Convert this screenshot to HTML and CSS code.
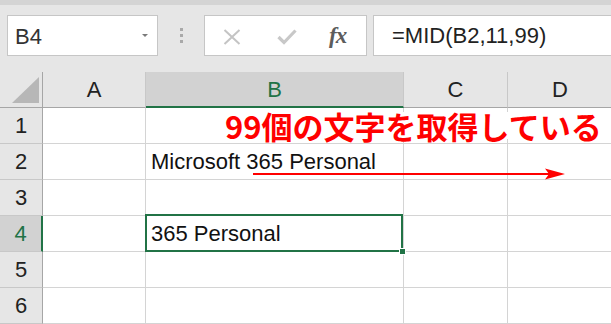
FILE: index.html
```html
<!DOCTYPE html>
<html lang="ja">
<head>
<meta charset="utf-8">
<title>MID</title>
<link rel="stylesheet" href="styles.css">
</head>
<body>
<div class="app">
  <div class="topstrip"></div>
  <div class="toolbar">
    <div class="namebox">
      <span class="name">B4</span>
      <span class="dropdown"></span>
    </div>
    <div class="grip"><i></i><i></i><i></i></div>
    <div class="buttons">
      <svg class="btn-x" width="18" height="16" viewBox="0 0 18 16"><path d="M1.5 1 L16.5 15 M16.5 1 L1.5 15" stroke="#c4c4c4" stroke-width="2" fill="none"/></svg>
      <svg class="btn-ok" width="20" height="16" viewBox="0 0 20 16"><path d="M1.5 8 L7 13.5 L18.5 1.5" stroke="#c8c8c8" stroke-width="3.2" fill="none"/></svg>
      <span class="fx">fx</span>
    </div>
    <div class="formula">=MID(B2,11,99)</div>
  </div>
  <div class="sheet">
    <div class="corner"><span class="tri"></span></div>
    <div class="colhead">A</div>
    <div class="colhead sel">B</div>
    <div class="colhead">C</div>
    <div class="colhead last">D</div>

    <div class="rowhead">1</div>
    <div class="cell"></div><div class="cell"></div><div class="cell"></div><div class="cell last"></div>

    <div class="rowhead">2</div>
    <div class="cell"></div><div class="cell text">Microsoft 365 Personal</div><div class="cell"></div><div class="cell last"></div>

    <div class="rowhead">3</div>
    <div class="cell"></div><div class="cell"></div><div class="cell"></div><div class="cell last"></div>

    <div class="rowhead sel">4</div>
    <div class="cell"></div><div class="cell text active">365 Personal<span class="handle"></span></div><div class="cell"></div><div class="cell last"></div>

    <div class="rowhead">5</div>
    <div class="cell"></div><div class="cell"></div><div class="cell"></div><div class="cell last"></div>

    <div class="rowhead">6</div>
    <div class="cell"></div><div class="cell"></div><div class="cell"></div><div class="cell last"></div>
  </div>

  <div class="callout">99個の文字を取得している</div>
  <svg class="arrow" width="320" height="14" viewBox="0 0 320 14">
    <line x1="0" y1="7" x2="300" y2="7" stroke="#ff0000" stroke-width="2.2"/>
    <polygon points="292,1.5 312,7 292,12.5 296,7" fill="#ff0000"/>
  </svg>
</div>
</body>
</html>
```

FILE: styles.css
```css
* { box-sizing: border-box; }
html, body { margin: 0; padding: 0; }
body {
  width: 611px;
  height: 324px;
  overflow: hidden;
  background: #e6e6e6;
  font-family: "Liberation Sans", Arial, sans-serif;
  color: #1a1a1a;
}
.app { position: relative; width: 611px; height: 324px; }

.topstrip { height: 5px; background: #d4d4d4; }

.toolbar {
  height: 67px;
  display: flex;
  align-items: flex-start;
  padding-top: 10px;
}
.namebox {
  margin-left: 7px;
  width: 151px;
  height: 41px;
  background: #fff;
  border: 1px solid #c6c6c6;
  display: flex;
  align-items: center;
  justify-content: space-between;
  padding: 3px 9px 0 7px;
}
.name { font-size: 22px; color: #333; line-height: 1; }
.dropdown {
  width: 0; height: 0;
  border-left: 3px solid transparent;
  border-right: 3px solid transparent;
  border-top: 3px solid #7a7a7a;
  margin-bottom: 4px;
}
.grip {
  width: 46px;
  height: 41px;
  display: flex;
  flex-direction: column;
  align-items: center;
  gap: 3px;
  padding-top: 13px;
}
.grip i { display: block; width: 3px; height: 3px; background: #a9a9a9; }

.buttons {
  width: 163px;
  height: 41px;
  background: #fff;
  border: 1px solid #c6c6c6;
  display: flex;
  align-items: center;
  padding: 2px 0 0 18px;
}
.btn-x { margin-right: 36px; }
.btn-ok { margin-right: 32px; }
.fx {
  font-family: "Liberation Serif", "Times New Roman", serif;
  font-style: italic;
  font-weight: bold;
  font-size: 23px;
  color: #5c5c5c;
  letter-spacing: -1px;
  line-height: 1;
  margin-top: -2px;
}
.formula {
  margin-left: 6px;
  flex: 1;
  height: 41px;
  background: #fff;
  border: 1px solid #c6c6c6;
  border-right: none;
  font-size: 22px;
  line-height: 39px;
  padding-left: 18px;
  color: #222;
}

.sheet {
  display: grid;
  grid-template-columns: 43px 103px 258px 104px 104px;
  grid-template-rows: 36px repeat(6, 36px);
  background: #fff;
  font-size: 22px;
  line-height: 35px;
}
.corner {
  background: #e6e6e6;
  border-right: 1px solid #a6a6a6;
  border-bottom: 1px solid #a6a6a6;
  position: relative;
}
.tri {
  position: absolute;
  left: 12px; top: 5px;
  width: 0; height: 0;
  border-left: 27px solid transparent;
  border-bottom: 26px solid #b7b7b7;
}
.colhead {
  background: #e6e6e6;
  border-right: 1px solid #c8c8c8;
  border-bottom: 1px solid #a6a6a6;
  text-align: center;
  color: #222;
}
.colhead.sel {
  background: #d2d2d2;
  color: #217346;
  border-bottom: 2px solid #217346;
}
.colhead.last { border-right: none; }
.rowhead {
  background: #e6e6e6;
  border-right: 1px solid #a6a6a6;
  border-bottom: 1px solid #c8c8c8;
  text-align: center;
  color: #222;
}
.rowhead.sel {
  background: #d2d2d2;
  color: #217346;
  border-right: 2px solid #217346;
}
.cell {
  border-right: 1px solid #d4d4d4;
  border-bottom: 1px solid #d4d4d4;
  white-space: nowrap;
}
.cell.last { border-right: none; }
.cell.text { padding-left: 5px; color: #111; overflow: visible; }
.cell.active { position: relative; }
.cell.active::after {
  content: "";
  position: absolute;
  left: -1px; top: -2px; right: 0; bottom: -1px;
  border: 2px solid #217346;
  pointer-events: none;
}
.handle {
  position: absolute;
  left: 253px; top: 32px;
  width: 7px; height: 7px;
  background: #217346;
  border: 1px solid #fff;
  z-index: 2;
}

.callout {
  position: absolute;
  left: 222px;
  top: 112px;
  padding: 0 3px;
  background: #fff;
  color: #ff0000;
  font-family: "Noto Sans CJK JP", sans-serif;
  font-weight: 700;
  font-size: 31px;
  line-height: 27px;
  white-space: nowrap;
}
.arrow {
  position: absolute;
  left: 253px;
  top: 167px;
}
```
